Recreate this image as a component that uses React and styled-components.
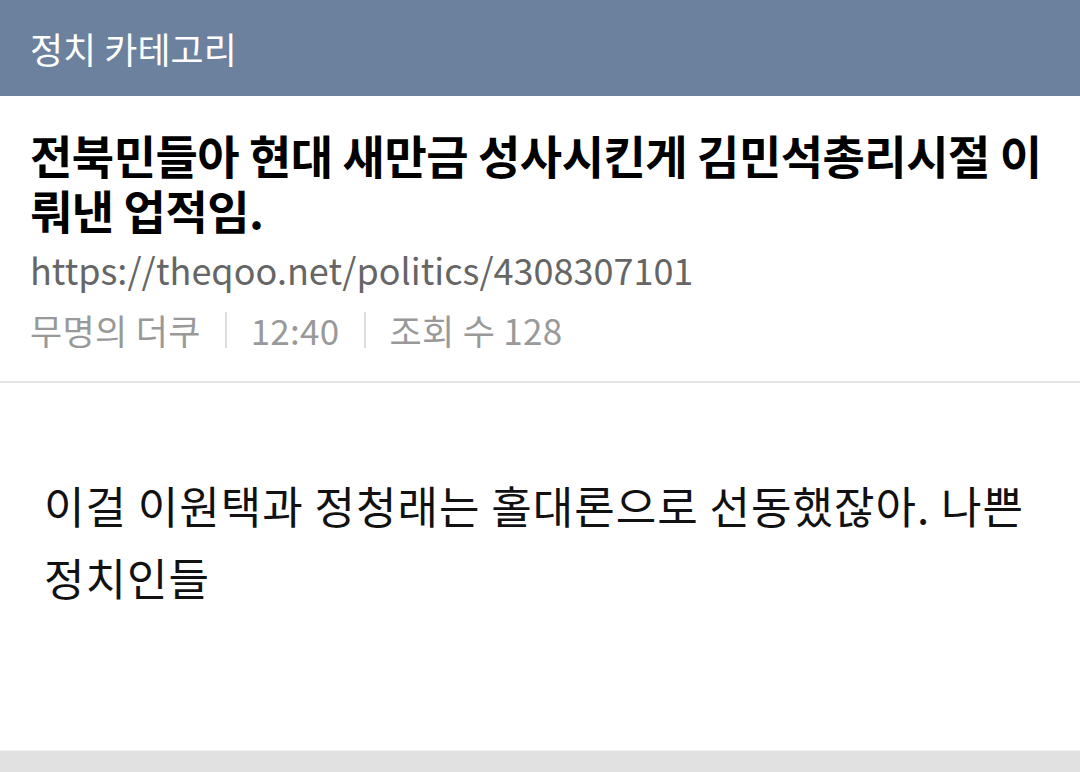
import React from 'react'
import styled, { createGlobalStyle } from 'styled-components'

const GlobalStyle = createGlobalStyle`
  html, body {
    margin: 0;
    padding: 0;
    background: #e1e1e1;
  }
  body {
    font-family: "Noto Sans CJK KR", "Noto Sans", sans-serif;
  }
`

const Page = styled.div`
  width: 1080px;
  height: 772px;
  display: flex;
  flex-direction: column;
  background: #e1e1e1;
  overflow: hidden;
`

const Header = styled.header`
  height: 96px;
  flex-shrink: 0;
  background: #6b819e;
  display: flex;
  align-items: center;
  padding: 0 30px;
  box-sizing: border-box;
  color: #ffffff;
  font-size: 36px;
  letter-spacing: 0;
`

const Post = styled.section`
  background: #ffffff;
  display: flex;
  flex-direction: column;
`

const Info = styled.div`
  padding: 31px 30px 22px;
  border-bottom: 2px solid #e4e4e4;
`

const Title = styled.h1`
  margin: 0;
  font-size: 46px;
  font-weight: 700;
  line-height: 55px;
  color: #000;
  letter-spacing: -0.5px;
`

const Url = styled.div`
  margin-top: 6px;
  font-size: 36px;
  line-height: 52px;
  color: #666666;
`

const Meta = styled.div`
  margin-top: 6px;
  display: flex;
  align-items: center;
  font-size: 35px;
  line-height: 58px;
  color: #999999;
  letter-spacing: 0.3px;
`

const Sep = styled.span`
  width: 2px;
  height: 36px;
  background: #dddddd;
  margin: 0 24px;
`

const Body = styled.div`
  height: 368px;
  padding: 86px 44px 0;
  box-sizing: border-box;
  font-size: 44px;
  line-height: 72px;
  color: #111;
  letter-spacing: 1px;
  border-bottom: 1px solid #f2f2f2;
`

export default function App() {
  return (
    <>
      <GlobalStyle />
      <Page>
        <Header>정치 카테고리</Header>
        <Post>
          <Info>
            <Title>전북민들아 현대 새만금 성사시킨게 김민석총리시절 이뤄낸 업적임.</Title>
            <Url>https://theqoo.net/politics/4308307101</Url>
            <Meta>
              <span>무명의 더쿠</span>
              <Sep />
              <span>12:40</span>
              <Sep />
              <span>조회 수 128</span>
            </Meta>
          </Info>
          <Body>이걸 이원택과 정청래는 홀대론으로 선동했잖아. 나쁜 정치인들</Body>
        </Post>
      </Page>
    </>
  )
}
